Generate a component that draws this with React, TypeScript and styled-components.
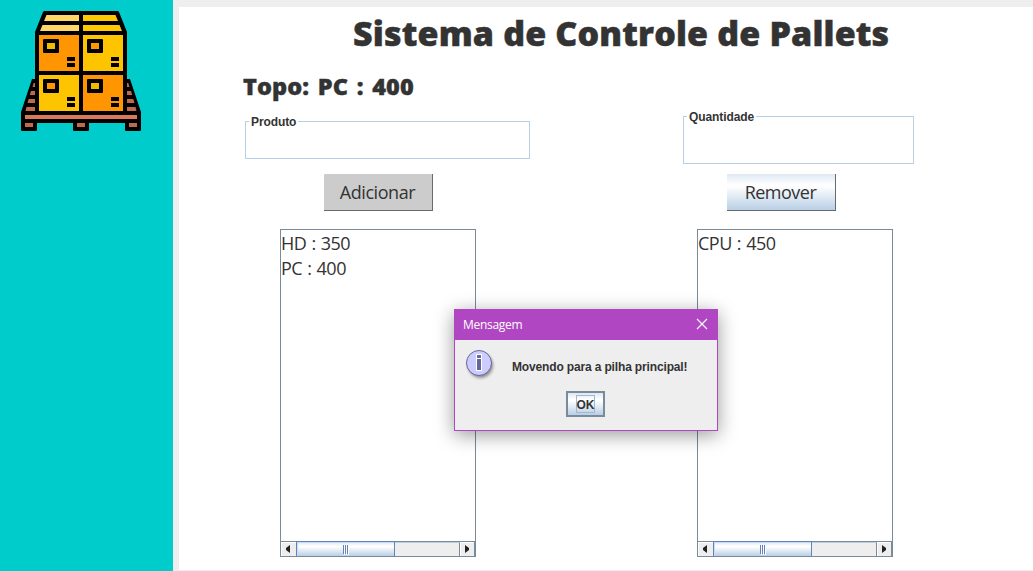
import React from 'react';
import styled, { createGlobalStyle } from 'styled-components';

const GlobalStyle = createGlobalStyle`
  * { box-sizing: border-box; }
  body { margin: 0; background: #eeeeee; overflow: hidden; }
`;

const ui = `"Open Sans", "Noto Sans", sans-serif`;
const swing = `"Liberation Sans", Arial, sans-serif`;
const metal = `linear-gradient(#dde8f3 0%, #ffffff 30%, #ffffff 34%, #b8cfe5 100%)`;

const Window = styled.div`
  position: relative;
  display: flex;
  width: 1033px;
  height: 571px;
  color: #333333;
  background: #eeeeee;
`;

const Sidebar = styled.aside`
  width: 173px;
  height: 571px;
  padding: 11px 0 0 21px;
  background: #00cccc;
`;

const Main = styled.main`
  width: 854px;
  height: 563px;
  margin: 7px 0 0 6px;
  background: #ffffff;
`;

const Title = styled.h1`
  margin: 0 0 0 174px;
  height: 56px;
  font: 800 34px/52px ${ui};
  letter-spacing: 0.15px;
  -webkit-text-stroke: 0.5px #333333;
  white-space: nowrap;
`;

const Top = styled.h2`
  margin: 0 0 0 64px;
  height: 40px;
  font: 800 23.5px/46px ${ui};
  letter-spacing: 0.1px;
  word-spacing: 2.4px;
  -webkit-text-stroke: 0.4px #333333;
  white-space: nowrap;
`;

const Columns = styled.div`
  display: flex;
  align-items: flex-start;
  padding-left: 66px;
`;

const Column = styled.section<{ $width: number; $gap: number }>`
  display: flex;
  flex-direction: column;
  width: ${p => p.$width}px;
  margin-right: ${p => p.$gap}px;
`;

const Field = styled.fieldset<{ $top: number; $height: number }>`
  min-width: 0;
  height: ${p => p.$height}px;
  margin: ${p => p.$top}px 0 0;
  padding: 0;
  border: 1px solid #b8cfe5;
`;

const Legend = styled.legend`
  height: 13px;
  margin-left: 3px;
  padding: 0 2px;
  font: bold 12px/15px ${swing};
  letter-spacing: -0.1px;
`;

const Button = styled.button<{ $left: number; $top: number; $pressed?: boolean; $spacing: number }>`
  width: 109px;
  height: 37px;
  margin: ${p => p.$top}px 0 0 ${p => p.$left}px;
  padding: 0 1px 0 0;
  border: solid #666b70;
  border-width: 0 1px 1px 0;
  border-radius: 1px 0 0 0;
  background: ${p => (p.$pressed ? '#cccccc' : metal)};
  color: #333333;
  font: 400 18px/36px ${ui};
  letter-spacing: ${p => p.$spacing}px;
`;

const List = styled.div<{ $left: number }>`
  display: flex;
  flex-direction: column;
  width: 196px;
  height: 328px;
  margin: 18px 0 0 ${p => p.$left}px;
  border: solid #7a8a99;
  border-width: 1px 1px 0;
`;

const Items = styled.div`
  flex: 1;
  padding-top: 1px;
`;

const Item = styled.div`
  height: 25px;
  font: 400 18px/25px ${ui};
  letter-spacing: -0.5px;
  word-spacing: 0.9px;
  white-space: nowrap;
`;

const Scroll = styled.div`
  display: flex;
  height: 16px;
  border: solid #7a8a99;
  border-width: 1px 1px 1px 0;
`;

const Arrow = styled.div<{ $right?: boolean }>`
  display: flex;
  align-items: center;
  justify-content: center;
  width: ${p => (p.$right ? 14 : 15)}px;
  padding-right: ${p => (p.$right ? 0 : 2)}px;
  border-left: ${p => (p.$right ? 0 : 1)}px solid #ffffff;
  box-shadow: ${p => (p.$right ? 'inset 1px 1px #ffffff' : 'inset 0 1px #ffffff')};
  background: #eeeeee;
`;

const Thumb = styled.div`
  display: flex;
  align-items: center;
  justify-content: center;
  gap: 1px;
  width: 99px;
  margin-top: -1px;
  padding-top: 1px;
  border: solid #6382bf;
  border-width: 1px 1px 0;
  background: ${metal};
  box-shadow: inset 1px 1px #c8ddf2;
`;

const Grip = styled.i`
  width: 1px;
  height: 9px;
  background: #6382bf;
  box-shadow: 1px 1px #ffffff;
`;

const Track = styled.div`
  flex: 1;
  border-top: 1px solid #b8cfe5;
  border-right: 1px solid #7a8a99;
  background: #eeeeee;
`;

const Dialog = styled.div`
  position: absolute;
  left: 454px;
  top: 309px;
  width: 264px;
  height: 122px;
  border: 1px solid #b146c2;
  background: #eeeeee;
  box-shadow: 0 4px 18px rgba(0, 0, 0, 0.4);
`;

const DialogBar = styled.header`
  display: flex;
  justify-content: space-between;
  height: 30px;
  padding: 0 9px 0 8px;
  background: #b146c2;
  color: #ffffff;
  font: 400 12px/30px ${ui};
  letter-spacing: -0.3px;
`;

const DialogBody = styled.div`
  display: flex;
  align-items: flex-start;
  height: 42px;
  padding: 8px 0 0 9px;
`;

const Message = styled.div`
  margin: 12px 0 0 16px;
  font: bold 12px/15px ${swing};
  letter-spacing: -0.15px;
  white-space: nowrap;
`;

const Ok = styled.button`
  display: flex;
  align-items: center;
  justify-content: center;
  width: 39px;
  height: 26px;
  margin: 9px 0 0 111px;
  padding: 0;
  border: 2px solid #7a8a99;
  background: ${metal};
  color: #333333;
  font: bold 12px/18px ${swing};
`;

const Focus = styled.span`
  width: 19px;
  height: 18px;
  border: 1px solid #a3b8cc;
  display: flex;
  justify-content: center;
`;

const Box = ({ x, y, fill, label }: { x: number; y: number; fill: string; label: string }) => (
  <g>
    <rect x={x} y={y} width="40" height="36" fill={fill} />
    <rect x={x + 4} y={y + 4} width="16" height="14" rx="1" />
    <rect x={x + 8} y={y + 8} width="8" height="6" fill={label} />
    <path d={`M${x + 28} ${y + 22}h8v4h-8zM${x + 28} ${y + 28}h8v4h-8z`} />
  </g>
);

const PalletIcon = () => (
  <svg width="120" height="120" viewBox="21 11 120 120">
    <path d="M32 79H130L141 112V130Q141 131 140 131H126Q125 131 125 130V123H89V130Q89 131 88 131H74Q73 131 73 130V123H37V130Q37 131 36 131H22Q21 131 21 130V112Z" />
    <path d="M44 11H118L119 12L127 32V113H35V32L43 12Z" />
    <path fill="#ffd766" d="M46.5 15H79V21H44zM42.5 25H79V31H40z" />
    <path fill="#ffc800" d="M83 15H115.5L118 21H83zM83 25H119.5L122 31H83z" />
    <Box x={39} y={35} fill="#ff9500" label="#efbb00" />
    <Box x={83} y={35} fill="#ffc400" label="#ff9500" />
    <Box x={39} y={75} fill="#ffc400" label="#ff9500" />
    <Box x={83} y={75} fill="#ff9500" label="#efbb00" />
    <path
      fill="#bf694d"
      d="M33.7 83H35V87H32.5zM31 91H35V95H29.8zM28.7 99H35V103H27.5zM26.5 107H35V111H25.5zM127 83H128.3L129.5 87H127zM127 91H131L132.2 95H127zM127 99H133.3L134.5 103H127zM127 107H135.5L136.5 111H127z"
    />
    <path fill="#d9795a" d="M25 115H137V119H25z" />
    <path fill="#bf694d" d="M25 123h8v4h-8zM77 123h8v4h-8zM129 123h8v4h-8z" />
  </svg>
);

const InfoIcon = () => (
  <svg width="32" height="34" viewBox="0 0 32 34">
    <defs>
      <filter id="soft" x="-30%" y="-30%" width="160%" height="160%">
        <feGaussianBlur stdDeviation="1.4" />
      </filter>
    </defs>
    <circle cx="16.5" cy="17.5" r="12.5" fill="#000" opacity=".4" filter="url(#soft)" />
    <circle cx="15" cy="15" r="12.5" fill="#ccccff" stroke="#666699" />
    <path d="M12 6h6v17h-6z" fill="#fff" />
    <path d="M13 7h4v3h-4zM13 11h4v11h-4z" fill="#666699" />
  </svg>
);

const ScrollBar = () => (
  <Scroll>
    <Arrow>
      <svg width="4" height="8" viewBox="0 0 4 8"><path d="M4 0V8L0 5V3z" fill="#222" /></svg>
    </Arrow>
    <Thumb><Grip /><Grip /><Grip /></Thumb>
    <Track />
    <Arrow $right>
      <svg width="4" height="8" viewBox="0 0 4 8"><path d="M0 0V8L4 5V3z" fill="#222" /></svg>
    </Arrow>
  </Scroll>
);

const Stack = ({ left, items }: { left: number; items: string[] }) => (
  <List $left={left}>
    <Items>{items.map(item => <Item key={item}>{item}</Item>)}</Items>
    <ScrollBar />
  </List>
);

export default function App() {
  return (
    <>
      <GlobalStyle />
      <Window>
        <Sidebar><PalletIcon /></Sidebar>
        <Main>
          <Title>Sistema de Controle de Pallets</Title>
          <Top>Topo: PC : 400</Top>
          <Columns>
            <Column $width={285} $gap={153}>
              <Field $top={12} $height={44}><Legend>Produto</Legend></Field>
              <Button $left={79} $top={15} $pressed $spacing={-0.45}>Adicionar</Button>
              <Stack left={35} items={['HD : 350', 'PC : 400']} />
            </Column>
            <Column $width={231} $gap={0}>
              <Field $top={7} $height={54}><Legend>Quantidade</Legend></Field>
              <Button $left={44} $top={10} $spacing={-0.5}>Remover</Button>
              <Stack left={14} items={['CPU : 450']} />
            </Column>
          </Columns>
        </Main>
        <Dialog>
          <DialogBar>
            <span>Mensagem</span>
            <svg width="12" height="28" viewBox="0 0 12 28"><path d="M1 9L11 19M11 9L1 19" stroke="#fff" strokeWidth="1.1" /></svg>
          </DialogBar>
          <DialogBody>
            <InfoIcon />
            <Message>Movendo para a pilha principal!</Message>
          </DialogBody>
          <Ok><Focus>OK</Focus></Ok>
        </Dialog>
      </Window>
    </>
  );
}
